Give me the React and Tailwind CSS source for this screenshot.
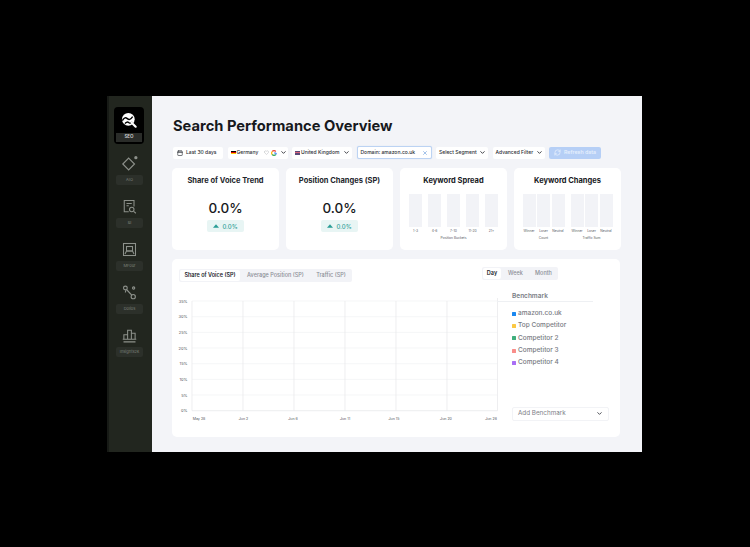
import { Calendar, ChevronDown, X, RefreshCw, Heart } from 'lucide-react';

const font = { fontFamily: 'Inter, sans-serif' };

function Logo() {
  return (
    <svg viewBox="0 0 24 24" className="w-[16px] h-[16px]">
      <circle cx="11" cy="11" r="9.500" fill="#fff" />
      <path d="M2 13c3-5 5-5 7.500-3s4.500 2 8-3" stroke="#000" strokeWidth="2.200" fill="none" />
      <path d="M6 17.500c2-3 4-3 6-1.500s3 1 5-1" stroke="#000" strokeWidth="2" fill="none" />
      <path d="M16 16l6 6" stroke="#fff" strokeWidth="3.200" strokeLinecap="round" />
    </svg>
  );
}

const DiamondIcon = () => (
  <svg viewBox="0 0 20 20" className="w-[18px] h-[18px]" fill="none" stroke="#8d918b" strokeWidth="1.300">
    <path d="M8.500 3.500L15 10l-6.500 6.500L2 10z" />
    <circle cx="16.500" cy="3" r="1.800" fill="#8d918b" stroke="none" />
  </svg>
);
const ReportIcon = () => (
  <svg viewBox="0 0 20 20" className="w-[15px] h-[15px]" fill="none" stroke="#8d918b" strokeWidth="1.400">
    <path d="M9 17H3V2h13v8" />
    <path d="M6 6h7M6 9h3" />
    <circle cx="13" cy="14" r="3" />
    <path d="M15.500 16.500L18.500 19" />
  </svg>
);
const FrameIcon = () => (
  <svg viewBox="0 0 20 20" className="w-[15px] h-[15px]" fill="none" stroke="#8d918b" strokeWidth="1.400">
    <rect x="2" y="2" width="16" height="16" />
    <rect x="6" y="6" width="8" height="6" />
    <path d="M4 16l2-4h8l2 4" />
  </svg>
);
const NodesIcon = () => (
  <svg viewBox="0 0 20 20" className="w-[15px] h-[15px]" fill="none" stroke="#8d918b" strokeWidth="1.500">
    <circle cx="4.500" cy="4" r="2.500" />
    <circle cx="15.500" cy="4" r="1.500" />
    <circle cx="15" cy="15.500" r="2.800" />
    <path d="M6 6l7 7.500M5 7l-.5 3" />
  </svg>
);
const BarsIcon = () => (
  <svg viewBox="0 0 20 20" className="w-[15px] h-[15px]" fill="none" stroke="#8d918b" strokeWidth="1.400">
    <path d="M2.500 15V9h5v6M7.500 15V3h5v12M12.500 15V7h5v8M1 15h18M2 18.500h16" />
  </svg>
);

function NavItem({ icon, label }) {
  return (
    <div className="flex flex-col items-center h-[43px]">
      <div className="h-[21px] flex items-center justify-center">{icon}</div>
      <div className="mt-[1px] w-[27px] h-[10px] rounded-[2px] bg-[#2c302a] flex items-center justify-center text-[4px] text-[#7d817b] whitespace-nowrap">
        {label}
      </div>
    </div>
  );
}

function Sidebar() {
  return (
    <aside className="w-[45px] shrink-0 bg-[#22261f] flex flex-col items-center pt-[11px] border-l-2 border-[#171a16]">
      <div className="w-[30px] h-[37px] rounded-[4px] bg-black flex flex-col items-center mb-[9px] overflow-hidden -ml-[3px]">
        <div className="flex-1 flex items-center justify-center">
          <Logo />
        </div>
        <div className="w-[26px] mb-[2px] h-[9px] bg-[#2a2c29] flex items-center justify-center text-[4.500px] font-semibold text-[#d5d6d4]">
          SEO
        </div>
      </div>
      <div className="flex flex-col -ml-[2px]">
        <NavItem icon={<DiamondIcon />} label="AIO" />
        <NavItem icon={<ReportIcon />} label="BI" />
        <NavItem icon={<FrameIcon />} label="MFour" />
        <NavItem icon={<NodesIcon />} label="Dolios" />
        <NavItem icon={<BarsIcon />} label="Insights2k" />
      </div>
    </aside>
  );
}

function Pill({ children, className = '' }) {
  return (
    <div className={`h-[12px] rounded-[2px] bg-white flex items-center text-[5px] font-medium text-[#2a2d33] whitespace-nowrap ${className}`}>
      {children}
    </div>
  );
}

const Chevron = () => <ChevronDown className="w-[7px] h-[7px] text-[#2a2d33]" strokeWidth={3} />;

function Filters() {
  return (
    <div className="flex items-center mt-[10px] ml-[1px] gap-[4.500px]">
      <Pill className="w-[50px] pl-[4px] gap-[3px]">
        <Calendar className="w-[6px] h-[6px]" strokeWidth={2.500} />
        Last 30 days
      </Pill>
      <Pill className="w-[60px] pl-[3px] gap-[1px]">
        <span className="w-[5px] h-[4px] flex flex-col shrink-0">
          <span className="flex-1 bg-black" />
          <span className="flex-1 bg-[#dd0000]" />
          <span className="flex-1 bg-[#ffce00]" />
        </span>
        Germany
        <Heart className="w-[5px] h-[5px] ml-[5px] text-[#a8abb0]" />
        <svg viewBox="0 0 10 10" className="w-[6px] h-[6px] ml-[1px]" fill="none" strokeWidth="2">
          <path d="M8 2.500A4 4 0 0 0 2 2.500" stroke="#ea4335" />
          <path d="M2 2.500a4 4 0 0 0 0 5" stroke="#fbbc05" />
          <path d="M2 7.500a4 4 0 0 0 6 0" stroke="#34a853" />
          <path d="M8.500 5H5M8.500 5a4 4 0 0 1-.5 2.500" stroke="#4285f4" />
        </svg>
        <span className="ml-[2px]"><Chevron /></span>
      </Pill>
      <Pill className="w-[60px] pl-[3px] gap-[1px]">
        <span className="w-[5px] h-[4px] bg-[#5b4a78] shrink-0 flex items-center">
          <span className="w-full h-[1px] bg-[#d9637a]" />
        </span>
        United Kingdom
        <span className="ml-auto mr-[2px]"><Chevron /></span>
      </Pill>
      <Pill className="w-[75px] pl-[3px] border border-[#bcd3f3] shadow-[0_0_1px_#bcd3f3] text-[5.500px] h-[13px]">
        Domain: amazon.co.uk
        <X className="w-[6px] h-[6px] ml-auto mr-[3px] text-[#6f9fdc]" strokeWidth={2.500} />
      </Pill>
      <Pill className="w-[52px] pl-[3px]">
        Select Segment
        <span className="ml-auto mr-[2px]"><Chevron /></span>
      </Pill>
      <Pill className="w-[52px] pl-[3px]">
        Advanced Filter
        <span className="ml-auto mr-[2px]"><Chevron /></span>
      </Pill>
      <div className="h-[12px] w-[52px] rounded-[2px] bg-[#b6cff6] flex items-center pl-[5px] gap-[3px] text-[5.300px] font-medium text-[#e9f1fd] whitespace-nowrap">
        <RefreshCw className="w-[7px] h-[7px]" strokeWidth={2.500} />
        Refresh data
      </div>
    </div>
  );
}

function StatCard({ title }) {
  return (
    <div className="w-[107px] h-[82px] rounded-[5px] bg-white flex flex-col items-center pt-[8px]">
      <div className="text-[7.500px] leading-[10px] font-bold text-[#23262c] whitespace-nowrap">{title}</div>
      <div className="mt-[14px] text-[13.500px] leading-[17px] font-medium text-[#17191d]">0.0%</div>
      <div className="mt-[3px] w-[37px] h-[12px] rounded-[2px] bg-[#e8f5f4] flex items-center justify-center gap-[3px] text-[6px] font-medium text-[#2a9d96]">
        <svg viewBox="0 0 10 6" className="w-[6px] h-[4px]" fill="#2a9d96"><path d="M5 0l5 6H0z" /></svg>
        0.0%
      </div>
    </div>
  );
}

function Bar({ label, w }) {
  return (
    <div className={`flex flex-col items-center ${w}`}>
      <div className="w-full h-[33px] bg-[#f2f3f7]" />
      <div className="mt-[2px] text-[3.300px] leading-[4px] text-[#55585f] whitespace-nowrap">{label}</div>
    </div>
  );
}

function SpreadCard() {
  return (
    <div className="w-[107px] h-[82px] rounded-[5px] bg-white flex flex-col items-center pt-[8px]">
      <div className="text-[7.500px] leading-[10px] font-bold text-[#17191d]">Keyword Spread</div>
      <div className="mt-[8px] flex gap-[6px]">
        {['1-3', '4-6', '7-10', '11-20', '21+'].map((l) => <Bar key={l} label={l} w="w-[13px]" />)}
      </div>
      <div className="mt-[3px] text-[3.300px] leading-[4px] text-[#55585f]">Position Buckets</div>
    </div>
  );
}

function ChangesCard() {
  return (
    <div className="w-[107px] h-[82px] rounded-[5px] bg-white flex flex-col items-center pt-[8px]">
      <div className="text-[7.500px] leading-[10px] font-bold text-[#17191d]">Keyword Changes</div>
      <div className="mt-[8px] flex gap-[6px]">
        {['Count', 'Traffic Sum'].map((g) => (
          <div key={g} className="flex flex-col items-center">
            <div className="flex gap-[1.500px]">
              {['Winner', 'Loser', 'Neutral'].map((l) => <Bar key={l} label={l} w="w-[13px]" />)}
            </div>
            <div className="mt-[3px] text-[3.300px] leading-[4px] text-[#55585f]">{g}</div>
          </div>
        ))}
      </div>
    </div>
  );
}

function Chart() {
  const ys = [['35%', 12], ['30%', 27.700], ['25%', 43.400], ['20%', 59], ['15%', 74.700], ['10%', 90.400], ['5%', 106], ['0%', 121.700]];
  const xs = [13, 64, 115, 166, 217, 268, 318.500];
  const labels = [['May 28', 20], ['Jun 2', 64.500], ['Jun 6', 114], ['Jun 11', 166], ['Jun 15', 215], ['Jun 20', 267], ['Jun 26', 312]];
  return (
    <svg width="320" height="135" className="block overflow-visible" style={font}>
      {ys.map(([l, y]) => (
        <g key={l}>
          <line x1="13" x2="318.500" y1={y} y2={y} stroke={l === '0%' ? '#e4e5e8' : '#f1f2f4'} strokeWidth="0.700" />
          <text x="8.500" y={y + 1.500} fontSize="4" fill="#53565c" textAnchor="end">{l}</text>
        </g>
      ))}
      {xs.map((x, i) => <line key={x} x1={x} x2={x} y1={i === 6 ? 9 : 12} y2="121.700" stroke="#e6e7ea" strokeWidth="0.700" />)}
      {labels.map(([l, x]) => <text key={l} x={x} y="130.500" fontSize="3.600" fill="#53565c" textAnchor="middle">{l}</text>)}
    </svg>
  );
}

function Benchmark() {
  const rows = [
    ['amazon.co.uk', 'bg-[#1a87f0]'],
    ['Top Competitor', 'bg-[#fbc843]'],
    ['Competitor 2', 'bg-[#3fae7c]'],
    ['Competitor 3', 'bg-[#f98d8a]'],
    ['Competitor 4', 'bg-[#a96ef5]'],
  ];
  return (
    <div className="flex-1 flex flex-col">
      <div className="w-[96px] h-[13px] pt-[3px] pl-[15px] border-b border-[#eef0f3] text-[6.500px] leading-[8px] font-semibold text-[#7a7d85]">Benchmark</div>
      <div className="mt-[6px] pl-[15px] flex flex-col">
        {rows.map(([l, c]) => (
          <div key={l} className="flex items-center h-[12.200px] gap-[2px] text-[6.500px] font-medium text-[#777a82] whitespace-nowrap">
            <span className={`w-[4px] h-[4px] rounded-[0.500px] ${c}`} />
            {l}
          </div>
        ))}
      </div>
      <div className="mt-[38px] ml-[15px] w-[97px] h-[14px] rounded-[2px] border border-[#f2f3f6] flex items-center pl-[5px] pr-[5px] text-[6.300px] text-[#7d8087]">
        Add Benchmark
        <ChevronDown className="ml-auto w-[7px] h-[7px] text-[#3a3d44]" strokeWidth={3} />
      </div>
    </div>
  );
}

function Panel() {
  return (
    <div className="mt-[9px] w-[448px] h-[178px] rounded-[5px] bg-white pl-[7px] pt-[10px]">
      <div className="flex items-start justify-between pr-[62px]">
        <div className="w-[173px] h-[13px] rounded-[2px] bg-[#f2f3f7] flex items-center p-[1px] text-[5.500px] font-medium text-[#8b8e96] whitespace-nowrap">
          <div className="w-[60px] h-full rounded-[2px] bg-white flex items-center justify-center font-semibold text-[#23262c]">Share of Voice (SP)</div>
          <div className="w-[71px] text-center">Average Position (SP)</div>
          <div className="flex-1 text-center">Traffic (SP)</div>
        </div>
        <div className="w-[76px] h-[13px] rounded-[2px] bg-[#f2f3f7] flex items-center p-[1px] -mt-[2px] text-[5.500px] font-medium text-[#8b8e96]">
          <div className="w-[18px] h-full rounded-[2px] bg-white flex items-center justify-center font-semibold text-[#23262c]">Day</div>
          <div className="w-[29px] text-center">Week</div>
          <div className="flex-1 text-center">Month</div>
        </div>
      </div>
      <div className="flex mt-[7px]">
        <div className="w-[318px] shrink-0"><Chart /></div>
        <Benchmark />
      </div>
    </div>
  );
}

export default function App() {
  return (
    <div className="w-[750px] h-[547px] bg-black flex items-start pl-[107px] pt-[96px]" style={font}>
      <div className="w-[535px] h-[356px] flex">
        <Sidebar />
        <main className="flex-1 bg-[#f3f4f8] pl-[20px] pt-[20px]">
          <h1 className="text-[14.700px] leading-[20px] font-bold text-[#17191d] whitespace-nowrap pl-[1px]">Search Performance Overview</h1>
          <Filters />
          <div className="flex gap-[7px] mt-[9px]">
            <StatCard title="Share of Voice Trend" />
            <StatCard title="Position Changes (SP)" />
            <SpreadCard />
            <ChangesCard />
          </div>
          <Panel />
        </main>
      </div>
    </div>
  );
}
